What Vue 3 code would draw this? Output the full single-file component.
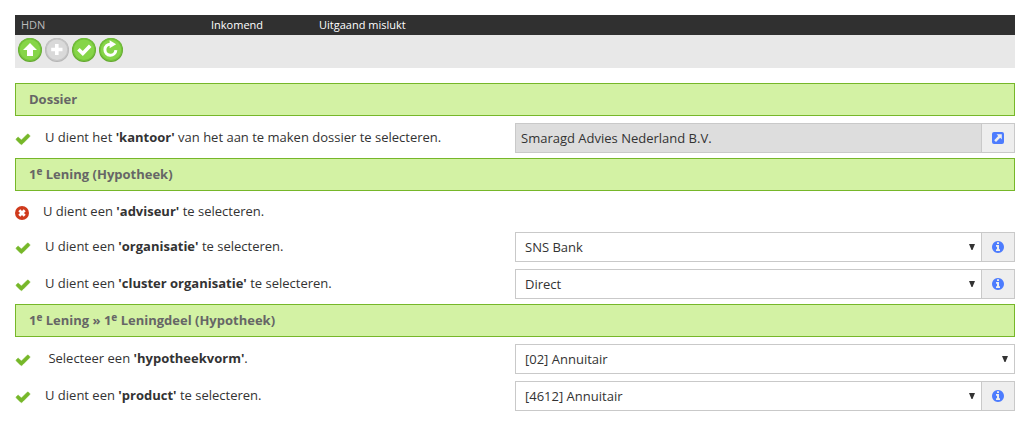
<template>
  <div class="hdn-page">
    <nav class="menu-bar">
      <span class="menu-title">HDN</span>
      <a class="menu-item inbound" href="#inkomend">Inkomend</a>
      <a class="menu-item" href="#uitgaand-mislukt">Uitgaand mislukt</a>
    </nav>

    <div class="toolbar">
      <button
        v-for="tool in tools"
        :key="tool.name"
        type="button"
        class="tool-button"
        :aria-label="tool.label"
        :disabled="tool.disabled">
        <svg viewBox="0 0 24 24" width="24" height="24">
          <circle class="tool-edge" cx="12" cy="12" r="12" />
          <circle class="tool-rim" cx="12" cy="11.5" r="11.5" />
          <circle class="tool-face" cx="12" cy="11.8" r="10.2" />
          <path v-if="tool.name === 'up'" class="glyph" d="M12 5l7 7h-4v6H9v-6H5z" />
          <path v-else-if="tool.name === 'add'" class="glyph" d="M10 6h3.6v3.7h3.9v3.6h-3.9V17H10v-3.7H6.2V9.7H10z" />
          <path v-else-if="tool.name === 'confirm'" class="glyph-line" d="M6.4 11.2l4.4 4.3L18.2 7.8" />
          <g v-else>
            <path class="glyph-line thin" d="M16.9 12.2a5.5 5.5 0 1 1-5.4-6" />
            <path class="glyph" d="M10.6 2.2l6.6 4-6.6 4z" />
          </g>
        </svg>
      </button>
    </div>

    <form class="dossier-form" @submit.prevent>
      <section v-for="section in sections" :key="section.id" class="form-section">
        <h2 class="section-title">
          <template v-for="(part, i) in section.title" :key="i">
            <sup v-if="part === 'e'">e</sup>
            <template v-else>{{ part }}</template>
          </template>
        </h2>

        <div v-for="row in section.rows" :key="row.id" class="form-row">
          <div class="row-message">
            <svg v-if="row.valid" class="status-icon" viewBox="0 0 1792 1792" width="16" height="16">
              <path
                fill="#76b729"
                stroke="#76b729"
                stroke-width="60"
                d="M1671 566q0 40-28 68l-724 724-136 136q-28 28-68 28t-68-28l-136-136-362-362q-28-28-28-68t28-68l136-136q28-28 68-28t68 28l294 295 656-657q28-28 68-28t68 28l136 136q28 28 28 68z" />
            </svg>
            <svg v-else class="status-icon" viewBox="0 0 14 14" width="14" height="14">
              <circle cx="7" cy="7" r="7" fill="#cf3a1c" />
              <path d="M4.3 4.3l5.4 5.4M9.7 4.3L4.3 9.7" stroke="#fff" stroke-width="2.8" />
            </svg>
            <component :is="row.type ? 'label' : 'span'" class="message-text" :for="row.type ? row.id : null">{{ row.before }}<strong>'{{ row.subject }}'</strong>{{ row.after }}</component>
          </div>

          <div v-if="row.type" class="field">
            <input
              v-if="row.type === 'text'"
              :id="row.id"
              v-model="values[row.id]"
              class="control"
              type="text"
              readonly />
            <div v-else class="select-wrapper">
              <select :id="row.id" v-model="values[row.id]" class="control">
                <option v-for="option in row.options" :key="option">{{ option }}</option>
              </select>
              <svg class="caret" viewBox="0 0 6 6" width="6" height="6">
                <path d="M0 0h6L3.5 6h-1z" fill="#333" />
              </svg>
            </div>
            <button v-if="row.addon" type="button" class="addon" :aria-label="addonLabels[row.addon]">
              <svg v-if="row.addon === 'info'" viewBox="128 128 1536 1536" width="12" height="12">
                <path
                  fill="#4d7cfe"
                  d="M1152 1376v-160q0-14-9-23t-23-9h-96v-512q0-14-9-23t-23-9h-320q-14 0-23 9t-9 23v160q0 14 9 23t23 9h96v320h-96q-14 0-23 9t-9 23v160q0 14 9 23t23 9h448q14 0 23-9t9-23zm-128-896v-160q0-14-9-23t-23-9h-192q-14 0-23 9t-9 23v160q0 14 9 23t23 9h192q14 0 23-9t9-23zm640 416q0 209-103 385.5t-279.5 279.5-385.5 103-385.5-103-279.5-279.5-103-385.5 103-385.5 279.5-279.5 385.5-103 385.5 103 279.5 279.5 103 385.5z" />
              </svg>
              <svg v-else viewBox="0 0 12 12" width="12" height="12">
                <rect width="12" height="12" rx="2" fill="#4d7cfe" />
                <path d="M4.6 2.2h5.2v5.2L8.2 5.8 4 10 2.2 8.2 6.2 4z" fill="#eee" />
              </svg>
            </button>
          </div>
        </div>
      </section>
    </form>
  </div>
</template>

<script setup>
import { reactive } from "vue";

const tools = [
  { name: "up", label: "Omhoog", disabled: false },
  { name: "add", label: "Toevoegen", disabled: true },
  { name: "confirm", label: "Bevestigen", disabled: false },
  { name: "refresh", label: "Vernieuwen", disabled: false },
];

const addonLabels = {
  info: "Informatie",
  link: "Openen",
};

const values = reactive({
  kantoor: "Smaragd Advies Nederland B.V.",
  organisatie: "SNS Bank",
  cluster: "Direct",
  hypotheekvorm: "[02] Annuitair",
  product: "[4612] Annuitair",
});

const sections = [
  {
    id: "dossier",
    title: ["Dossier"],
    rows: [
      {
        id: "kantoor",
        valid: true,
        before: "U dient het ",
        subject: "kantoor",
        after: " van het aan te maken dossier te selecteren.",
        type: "text",
        addon: "link",
      },
    ],
  },
  {
    id: "lening",
    title: ["1", "e", " Lening (Hypotheek)"],
    rows: [
      {
        id: "adviseur",
        valid: false,
        before: "U dient een ",
        subject: "adviseur",
        after: " te selecteren.",
      },
      {
        id: "organisatie",
        valid: true,
        before: "U dient een ",
        subject: "organisatie",
        after: " te selecteren.",
        type: "select",
        options: ["SNS Bank"],
        addon: "info",
      },
      {
        id: "cluster",
        valid: true,
        before: "U dient een ",
        subject: "cluster organisatie",
        after: " te selecteren.",
        type: "select",
        options: ["Direct"],
        addon: "info",
      },
    ],
  },
  {
    id: "leningdeel",
    title: ["1", "e", " Lening » 1", "e", " Leningdeel (Hypotheek)"],
    rows: [
      {
        id: "hypotheekvorm",
        valid: true,
        before: "\u00a0Selecteer een ",
        subject: "hypotheekvorm",
        after: ".",
        type: "select",
        options: ["[02] Annuitair"],
      },
      {
        id: "product",
        valid: true,
        before: "U dient een ",
        subject: "product",
        after: " te selecteren.",
        type: "select",
        options: ["[4612] Annuitair"],
        addon: "info",
      },
    ],
  },
];
</script>

<style>
body {
  margin: 0;
  background: #fff;
}
</style>

<style scoped>
.hdn-page {
  padding: 15px 13px 15px 15px;
  font-family: "Open Sans", "Noto Sans", sans-serif;
  font-size: 13px;
  line-height: 18px;
  color: #333;
}

.menu-bar {
  display: flex;
  align-items: center;
  height: 20px;
  padding-left: 6px;
  background: #303030;
  font-size: 11px;
}

.menu-title {
  width: 190px;
  color: #bbb;
}

.menu-item {
  color: #fff;
  text-decoration: none;
}

.menu-item.inbound {
  width: 108px;
}

.toolbar {
  display: flex;
  gap: 3px;
  padding: 3px 3px 6px;
  background: #e8e8e8;
}

.tool-button {
  width: 24px;
  height: 24px;
  padding: 0;
  border: none;
  background: none;
  cursor: pointer;
}

.tool-button svg,
.addon svg {
  display: block;
}

.tool-edge {
  fill: #62a52e;
}

.tool-rim {
  fill: #72c03a;
}

.tool-face {
  fill: #86d548;
}

.tool-button:disabled {
  cursor: default;
}

.tool-button:disabled .tool-edge {
  fill: #b4b4b4;
}

.tool-button:disabled .tool-rim {
  fill: #c4c4c4;
}

.tool-button:disabled .tool-face {
  fill: #d9d9d9;
}

.glyph {
  fill: #fff;
}

.glyph-line {
  fill: none;
  stroke: #fff;
  stroke-width: 3.6;
}

.glyph-line.thin {
  stroke-width: 3;
}

.dossier-form {
  margin-top: 15px;
}

.form-section + .form-section {
  margin-top: 5px;
}

.section-title {
  margin: 0;
  padding: 0 13px;
  border: 1px solid #76b729;
  background: #d3f2a4;
  color: #666;
  font-size: 13px;
  font-weight: 700;
  line-height: 31px;
  white-space: pre-wrap;
}

.section-title sup {
  font-size: 10px;
  line-height: 0;
  vertical-align: 4px;
}

.form-row {
  display: flex;
  align-items: center;
  min-height: 34px;
  padding-top: 7px;
  box-sizing: border-box;
}

.row-message {
  display: flex;
  align-items: center;
  gap: 14px;
  flex: 1;
  padding-bottom: 2px;
}

.status-icon {
  flex: none;
  margin-top: 4px;
}

.message-text {
  white-space: pre-wrap;
}

.field {
  display: flex;
  flex: 1;
  min-width: 0;
  height: 30px;
}

.select-wrapper {
  position: relative;
  display: flex;
  flex: 1;
}

.control {
  flex: 1;
  width: 100%;
  min-width: 0;
  height: 30px;
  margin: 0;
  padding: 0 5px;
  box-sizing: border-box;
  border: 1px solid #c9c9c9;
  border-radius: 0;
  background: #fff;
  color: #333;
  font: inherit;
}

.control[readonly] {
  background: #ddd;
}

select.control {
  padding: 0 20px 0 9px;
  appearance: none;
}

.caret {
  position: absolute;
  top: 12px;
  right: 7px;
  pointer-events: none;
}

.addon {
  display: flex;
  align-items: center;
  justify-content: center;
  width: 33px;
  padding: 0;
  border: 1px solid #c9c9c9;
  border-left: none;
  background: #eee;
  cursor: pointer;
}
</style>
